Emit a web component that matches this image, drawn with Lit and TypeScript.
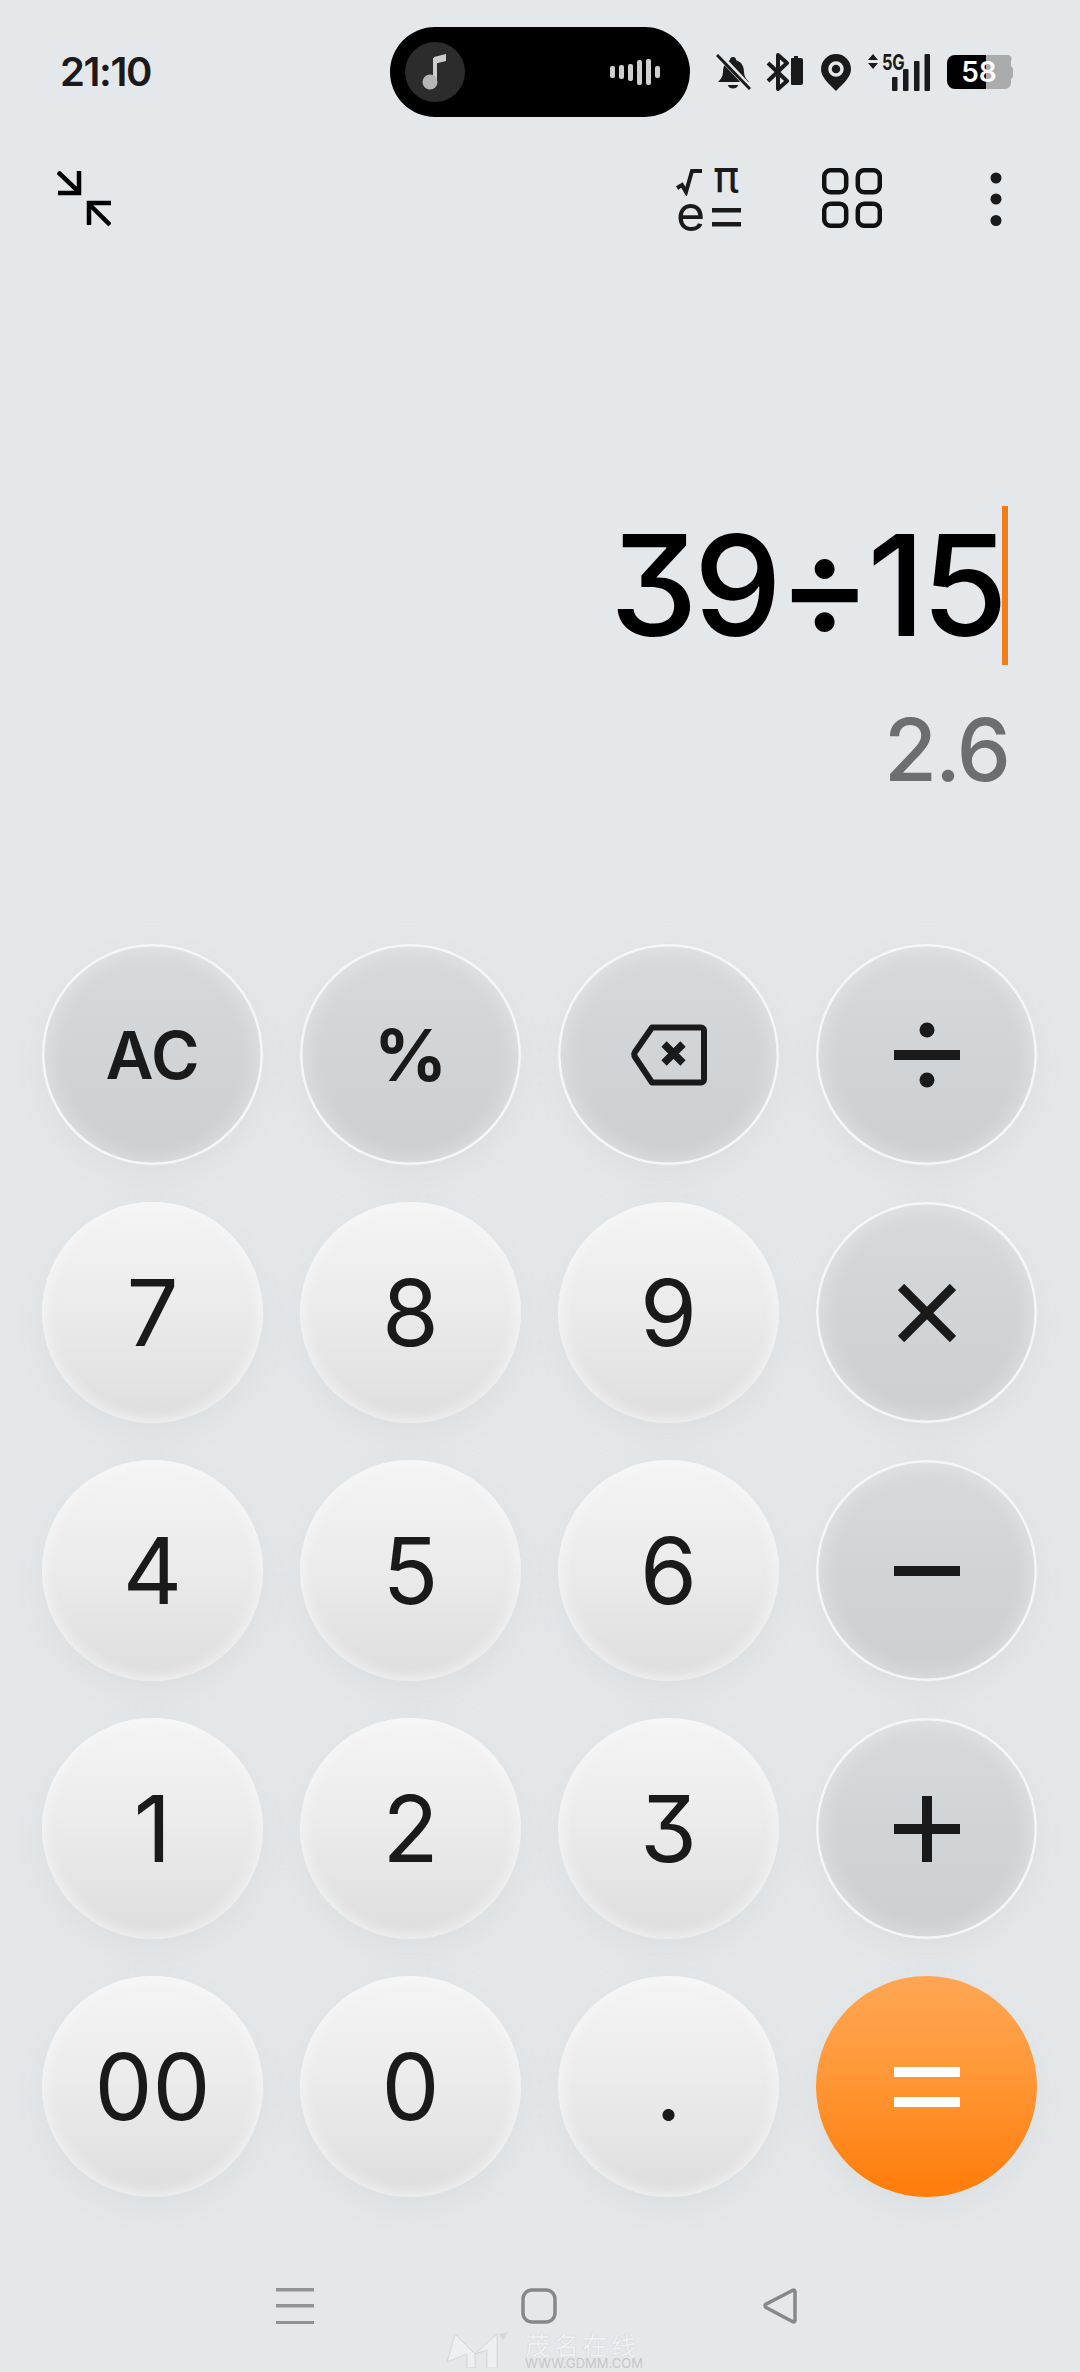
import { LitElement, html, css, svg } from "lit";
import { customElement } from "lit/decorators.js";

const ops: Record<string, unknown> = {
  back: svg`<svg width="76" height="62" viewBox="0 0 76 62"><path d="M21 3.5H70a3 3 0 0 1 3 3v49a3 3 0 0 1-3 3H21L4 33a5 5 0 0 1 0-5z" fill="none" stroke="#1a1a1a" stroke-width="6" stroke-linejoin="round"/><path d="M33 20l19 19M52 20L33 39" stroke="#1a1a1a" stroke-width="7.5" fill="none"/></svg>`,
  div: svg`<svg width="66" height="66" viewBox="0 0 66 66"><circle cx="33" cy="8" r="7.5" fill="#1a1a1a"/><circle cx="33" cy="58" r="7.5" fill="#1a1a1a"/><rect y="28" width="66" height="10" fill="#1a1a1a"/></svg>`,
  mul: svg`<svg width="58" height="58" viewBox="0 0 58 58"><path d="M3 3l52 52M55 3L3 55" stroke="#1a1a1a" stroke-width="9" fill="none"/></svg>`,
  sub: svg`<svg width="66" height="10" viewBox="0 0 66 10"><rect width="66" height="10" fill="#1a1a1a"/></svg>`,
  add: svg`<svg width="66" height="66" viewBox="0 0 66 66"><rect y="28" width="66" height="10" fill="#1a1a1a"/><rect x="28" width="10" height="66" fill="#1a1a1a"/></svg>`,
  eq: svg`<svg width="66" height="40" viewBox="0 0 66 40"><rect width="66" height="10" fill="#fff"/><rect y="30" width="66" height="10" fill="#fff"/></svg>`,
};

type Key = { t?: string; i?: string; k: string; c?: string };
const keys: Key[] = [
  { t: "AC", k: "fn", c: "bold" }, { t: "%", k: "fn", c: "pct" }, { i: "back", k: "fn" }, { i: "div", k: "fn" },
  { t: "7", k: "num" }, { t: "8", k: "num" }, { t: "9", k: "num" }, { i: "mul", k: "fn" },
  { t: "4", k: "num" }, { t: "5", k: "num" }, { t: "6", k: "num" }, { i: "sub", k: "fn" },
  { t: "1", k: "num" }, { t: "2", k: "num" }, { t: "3", k: "num" }, { i: "add", k: "fn" },
  { t: "00", k: "num" }, { t: "0", k: "num" }, { t: ".", k: "num" }, { i: "eq", k: "eq" },
];
const wave = [12, 14, 17, 25, 26, 12];

@customElement("app-root")
export class AppRoot extends LitElement {
  static styles = css`
    :host {
      display: flex; flex-direction: column; width: 1080px; height: 2372px; position: relative; overflow: hidden;
      background: #e5e8ea; color: #1a1a1a;
      font-family: Inter, "Liberation Sans", sans-serif; font-feature-settings: "cv09";
    }
    .status { display: flex; align-items: center; height: 90px; margin-top: 27px; padding-left: 60px; }
    .time { width: 330px; font-size: 40px; font-weight: 600; letter-spacing: -1.4px; line-height: 90px; margin-top: -1px; color: #1a1a1a; }
    .pill { width: 300px; height: 90px; border-radius: 45px; background: #000; display: flex; align-items: center; justify-content: space-between; padding: 0 30px 0 15px; box-sizing: border-box; }
    .disc { width: 60px; height: 60px; border-radius: 50%; background: #2c2c2c; display: flex; align-items: center; justify-content: center; }
    .wave { display: flex; align-items: center; gap: 4px; }
    .wave i { display: block; width: 5px; border-radius: 2px; background: #cfcfcf; }
    .sys { display: flex; align-items: center; margin-left: 26px; }
    .sys svg { display: block; }
    .bell { margin-right: 15px; }
    .bt { margin-right: 18px; }
    .pin { margin-right: 17px; }
    .net { margin-right: 17px; position: relative; width: 62px; height: 37px; }
    .net svg { position: absolute; inset: 0; }
    .five { position: absolute; left: 14px; top: -2px; font-size: 22px; font-weight: 700; letter-spacing: -.5px; transform: scaleX(.75); transform-origin: left; line-height: 20px; color: #1a1a1a; }
    .batt { position: relative; width: 66px; height: 34px; display: flex; align-items: center; justify-content: center; }
    .batt svg { position: absolute; inset: 0; }
    .batt span { position: relative; color: #fff; font-size: 28px; font-weight: 600; line-height: 34px; margin-right: 2px; }
    .tools { display: flex; align-items: flex-start; height: 62px; margin-top: 51px; padding-left: 57px; }
    .tools svg { display: block; }
    .sci { position: relative; width: 64px; height: 62px; margin-left: 565px; }
    .sci span { position: absolute; line-height: 1; color: #1a1a1a; }
    .pi { left: 37px; top: -13px; font-size: 44px; font-family: "DejaVu Sans", sans-serif; font-weight: 400; }
    .e { left: 0; top: 20px; font-size: 50px; font-weight: 400; }
    .gridic { margin-left: 82px; }
    .dots { margin-left: 108px; }
    .expr { display: flex; justify-content: flex-end; align-items: center; height: 159px; margin-top: 276px; padding-right: 72px; }
    .exprt { font-size: 140px; line-height: 159px; color: #000; font-weight: 500; letter-spacing: -4px; margin-right: -2px; }
    .cursor { width: 6px; height: 159px; background: #f47d18; position: relative; }
    .res { margin-top: 35px; height: 100px; line-height: 100px; padding-right: 71px; text-align: right; font-size: 86px; font-weight: 500; color: #6b6f6f; letter-spacing: -2px; }
    .keypad { display: grid; grid-template-columns: repeat(4, 221px); grid-auto-rows: 221px; gap: 37px; padding-left: 42px; margin-top: 144px; }
    .key { border-radius: 50%; display: flex; align-items: center; justify-content: center; font-size: 92px; font-weight: 400; line-height: 1; color: #1a1a1a; box-sizing: border-box; }
    .key svg { display: block; }
    .num { background: linear-gradient(#f5f5f5, #ececec 45%, #dfdfdf 95%); box-shadow: inset 0 0 14px 2px rgba(247,247,247,.9), 0 12px 34px rgba(196,202,206,.3); }
    .fn { background: linear-gradient(#d7dadc, #cbcfd1); box-shadow: inset 0 0 0 2.5px rgba(245,248,248,.95), inset 0 0 20px 5px rgba(236,238,239,.55), 0 12px 34px rgba(196,202,206,.3); }
    .eq { background: linear-gradient(#ffa654, #ff9a3b 40%, #ff7e0d 95%); box-shadow: 0 12px 34px rgba(196,202,206,.3); }
    .bold { font-size: 66px; font-weight: 600; }
    .pct { font-size: 72px; font-weight: 700; }
    .nav { display: flex; align-items: flex-start; margin-top: 91px; padding-left: 276px; }
    .nav svg { display: block; }
    .home { margin-left: 207px; }
    .backn { margin-left: 206px; }
    .mark { position: absolute; left: 443px; top: 2332px; display: flex; gap: 15px; opacity: .9; }
    .mark svg { display: block; }
    .mtext { display: flex; flex-direction: column; color: #f2f3f4; }
    .mcn { font-family: "Noto Sans CJK SC", sans-serif; font-size: 25px; line-height: 24px; letter-spacing: 3.7px; white-space: nowrap; text-shadow: 0 0 1px #b9bcbe; }
    .men { font-size: 13px; line-height: 12px; color: #c2c5c7; margin-top: 1px; letter-spacing: 0; }
  `;

  render() {
    return html`
      <div class="status">
        <div class="time">21:10</div>
        <div class="pill">
          <div class="disc">
            <svg width="26" height="36" viewBox="0 0 26 36"><path d="M13 4v24" stroke="#cdcdcd" stroke-width="4"/><path d="M12 3l12-3v7l-12 3z" fill="#cdcdcd"/><circle cx="8" cy="28" r="7.5" fill="#b5b5b5"/></svg>
          </div>
          <div class="wave">${wave.map((h) => html`<i style="height:${h}px"></i>`)}</div>
        </div>
        <div class="sys">
          <svg class="bell" width="35" height="36" viewBox="0 0 35 36"><path d="M17 3a3 3 0 0 1 3 3c6 2 8 7 8 12 0 4 2 7 5 10H2c3-3 5-6 5-10 0-5 2-10 7-12a3 3 0 0 1 3-3z" fill="#1a1a1a"/><path d="M12 31h10a5 3.5 0 0 1-10 0z" fill="#1a1a1a"/><path d="M1 -1L35 35" stroke="#e5e8ea" stroke-width="6"/><path d="M1 1L34 35" stroke="#1a1a1a" stroke-width="3"/></svg>
          <svg class="bt" width="37" height="38" viewBox="0 0 37 38"><path d="M2 10l19 18-9 8V2l9 8L2 28" fill="none" stroke="#1a1a1a" stroke-width="4" stroke-linejoin="round"/><path d="M25 6a1 1 0 0 1 1-1h2V3h4v2h3a2 2 0 0 1 2 2v23a2 2 0 0 1-2 2H26a1 1 0 0 1-1-1z" fill="#1a1a1a"/></svg>
          <svg class="pin" width="30" height="37" viewBox="0 0 30 37"><path d="M15 0a15 15 0 0 1 15 15c0 8-7 14-15 22C7 29 0 23 0 15A15 15 0 0 1 15 0z" fill="#1a1a1a"/><circle cx="15" cy="15" r="6" fill="none" stroke="#e5e8ea" stroke-width="3.5"/></svg>
          <div class="net">
            <svg width="62" height="37" viewBox="0 0 62 37"><path d="M5 0l5 6H0zM5 15l5-6H0z" fill="#1a1a1a"/><rect x="24" y="23" width="5.5" height="14" rx="1" fill="#1a1a1a"/><rect x="35" y="15" width="5.5" height="22" rx="1" fill="#1a1a1a"/><rect x="46" y="7" width="5.5" height="30" rx="1" fill="#1a1a1a"/><rect x="56.5" y="0" width="5.5" height="37" rx="1" fill="#1a1a1a"/></svg>
            <span class="five">5G</span>
          </div>
          <div class="batt">
            <svg width="66" height="34" viewBox="0 0 66 34"><path d="M39 0h21a4 4 0 0 1 4 6v5a4 4 0 0 1 2 3v7a4 4 0 0 1-2 3v4a6 6 0 0 1-6 6H39z" fill="#a9abad"/><path d="M8 0h31v34H8a8 8 0 0 1-8-8V8a8 8 0 0 1 8-8z" fill="#000"/></svg>
            <span>58</span>
          </div>
        </div>
      </div>

      <div class="tools">
        <svg width="54" height="56" viewBox="0 0 54 56" style="margin-top:3px"><path d="M1 1l21 20M22 0v22H1M53 54L33 34M32 54V32h22" fill="none" stroke="#000" stroke-width="4.5"/></svg>
        <div class="sci">
          <svg width="28" height="28" viewBox="0 0 28 28" style="position:absolute;left:0;top:0"><path d="M1 20l5-3 4 7 6-21h10" fill="none" stroke="#1a1a1a" stroke-width="4"/></svg>
          <span class="pi">π</span>
          <span class="e">e</span>
          <svg width="29" height="20" viewBox="0 0 29 20" style="position:absolute;left:36px;top:40px"><rect width="29" height="4.5" fill="#1a1a1a"/><rect y="14" width="29" height="4.5" fill="#1a1a1a"/></svg>
        </div>
        <svg class="gridic" width="60" height="60" viewBox="0 0 60 60"><g fill="none" stroke="#111" stroke-width="4.5"><rect x="2.2" y="2.2" width="22" height="22" rx="6.5"/><rect x="35.8" y="2.2" width="22" height="22" rx="6.5"/><rect x="2.2" y="35.8" width="22" height="22" rx="6.5"/><rect x="35.8" y="35.8" width="22" height="22" rx="6.5"/></g></svg>
        <svg class="dots" width="12" height="58" viewBox="0 0 12 58" style="margin-top:4px"><circle cx="6" cy="6" r="5.5" fill="#1a1a1a"/><circle cx="6" cy="27" r="5.5" fill="#1a1a1a"/><circle cx="6" cy="48.5" r="5.5" fill="#1a1a1a"/></svg>
      </div>

      <div class="expr"><span class="exprt">39÷15</span><span class="cursor"></span></div>
      <div class="res">2.6</div>

      <div class="keypad">
        ${keys.map((k) => html`<div class="key ${k.k} ${k.c ?? ""}">${k.i ? ops[k.i] : k.t}</div>`)}
      </div>

      <div class="nav">
        <svg width="38" height="36" viewBox="0 0 38 36"><g fill="#8f9394"><rect y="0" width="38" height="3.5"/><rect y="16" width="38" height="3.5"/><rect y="33" width="38" height="3.5"/></g></svg>
        <svg class="home" width="36" height="36" viewBox="0 0 36 36"><rect x="2" y="2" width="32" height="32" rx="9" fill="none" stroke="#858989" stroke-width="3.5"/></svg>
        <svg class="backn" width="35" height="36" viewBox="0 0 35 36"><path d="M32 3.5v29a1.5 1.5 0 0 1-2.2 1.2L3 19.5a2 2 0 0 1 0-3.4L29.8 2.2A1.5 1.5 0 0 1 32 3.5z" fill="none" stroke="#858989" stroke-width="3.5" stroke-linejoin="round"/></svg>
      </div>

      <div class="mark">
        <svg width="67" height="36" viewBox="0 0 67 36"><g fill="#eef0f1" stroke="#c9cccd" stroke-width=".7"><path d="M12 2l20 20V36H24V22L4 30z"/><path d="M32 22L54 2v34H44V18z"/></g><path d="M56 2l9-2-5 8z" fill="#d4d6d8"/></svg>
        <div class="mtext"><span class="mcn">茂名在线</span><span class="men">WWW.GDMM.COM</span></div>
      </div>
    `;
  }
}
